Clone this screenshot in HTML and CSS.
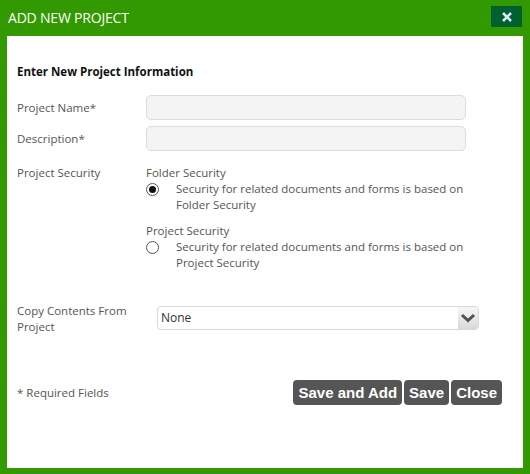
FILE: index.html
```html
<!DOCTYPE html>
<html>
<head>
<meta charset="utf-8">
<link rel="stylesheet" href="styles.css">
</head>
<body>
<div class="dialog">
  <div class="titlebar">
    <span class="title">ADD NEW PROJECT</span>
    <button class="close-x" aria-label="close">
      <svg width="12" height="12" viewBox="0 0 12 12"><path d="M2 2 L10 10 M10 2 L2 10" stroke="#d8ecf4" stroke-width="2.6" stroke-linecap="butt"/></svg>
    </button>
  </div>
  <div class="panel">
    <div class="heading">Enter New Project Information</div>
    <div class="row field-row">
      <div class="label">Project Name*</div>
      <div class="input"></div>
    </div>
    <div class="row field-row">
      <div class="label">Description*</div>
      <div class="input"></div>
    </div>
    <div class="row security">
      <div class="label">Project Security</div>
      <div class="options">
        <div class="option">
          <div class="opt-title">Folder Security</div>
          <div class="opt-body">
            <span class="radio checked"></span>
            <span class="opt-text">Security for related documents and forms is based on Folder Security</span>
          </div>
        </div>
        <div class="option">
          <div class="opt-title">Project Security</div>
          <div class="opt-body">
            <span class="radio"></span>
            <span class="opt-text">Security for related documents and forms is based on Project Security</span>
          </div>
        </div>
      </div>
    </div>
    <div class="row copy">
      <div class="label copy-label">Copy Contents From Project</div>
      <div class="select">
        <span class="select-val">None</span>
        <span class="select-arrow">
          <svg width="16" height="10" viewBox="0 0 16 10"><path d="M2 2 L8 7.5 L14 2" fill="none" stroke="#505050" stroke-width="3"/></svg>
        </span>
      </div>
    </div>
    <div class="footer">
      <div class="req">* Required Fields</div>
      <div class="buttons">
        <button class="btn">Save and Add</button>
        <button class="btn">Save</button>
        <button class="btn">Close</button>
      </div>
    </div>
  </div>
</div>
</body>
</html>
```
FILE: styles.css
```css
html, body {
  margin: 0;
  padding: 0;
}
body {
  font-family: "Open Sans", "Noto Sans", sans-serif;
}
.dialog {
  width: 530px;
  height: 474px;
  background: #339900;
  display: flex;
  flex-direction: column;
}
.titlebar {
  height: 36px;
  display: flex;
  align-items: center;
  justify-content: space-between;
  padding: 0 8px 0 8px;
  box-sizing: border-box;
}
.title {
  color: #ffffff;
  font-size: 14px;
  letter-spacing: -0.2px;
  margin-top: -2px;
}
.close-x {
  width: 31px;
  height: 21px;
  background: #006030;
  border: 0;
  padding: 0;
  margin-top: -3px;
  margin-right: 0;
  display: flex;
  align-items: center;
  justify-content: center;
}
.panel {
  flex: 1;
  margin: 0 7px 6px 7px;
  background: #ffffff;
  padding: 28px 0 0 10px;
  box-sizing: border-box;
  color: #555555;
  font-size: 11.5px;
}
.heading {
  font-weight: bold;
  color: #111111;
  font-size: 11.5px;
  margin-bottom: 16px;
}
.row {
  display: flex;
}
.label {
  width: 129px;
  flex-shrink: 0;
}
.field-row {
  align-items: center;
  height: 25px;
  margin-bottom: 6px;
}
.input {
  width: 318px;
  height: 23px;
  border: 1px solid #dcdcdc;
  border-radius: 5px;
  background: #f4f4f4;
}
.security {
  margin-top: 14px;
  line-height: 16px;
}
.option {
  margin-bottom: 10px;
}
.opt-body {
  display: flex;
  align-items: flex-start;
}
.radio {
  width: 11px;
  height: 11px;
  border: 1px solid #555;
  border-radius: 50%;
  flex-shrink: 0;
  margin-top: 2px;
  margin-right: 17px;
  display: flex;
  align-items: center;
  justify-content: center;
  box-sizing: content-box;
}
.radio.checked::after {
  content: "";
  width: 7px;
  height: 7px;
  border-radius: 50%;
  background: #111;
}
.opt-text {
  width: 300px;
}
.copy {
  margin-top: 21px;
  line-height: 16px;
}
.copy-label {
  width: 140px;
  padding-top: 1px;
}
.select {
  width: 320px;
  height: 22px;
  border: 1px solid #d8d8d8;
  border-radius: 4px;
  display: flex;
  align-items: center;
  justify-content: space-between;
  overflow: hidden;
  margin-top: 4px;
}
.select-val {
  padding-left: 3px;
  color: #333;
  font-size: 12px;
}
.select-arrow {
  width: 20px;
  height: 22px;
  background: linear-gradient(#f6f6f6, #d8d8d8);
  display: flex;
  align-items: center;
  justify-content: center;
}
.footer {
  display: flex;
  justify-content: space-between;
  align-items: center;
  margin-top: 45px;
  padding-right: 21px;
}
.buttons {
  display: flex;
  gap: 2px;
}
.btn {
  background: #555555;
  color: #ffffff;
  border: 0;
  border-radius: 4px;
  height: 25px;
  padding: 0 5px;
  font-family: "Liberation Sans", Arial, sans-serif;
  font-weight: bold;
  font-size: 15px;
}
```
